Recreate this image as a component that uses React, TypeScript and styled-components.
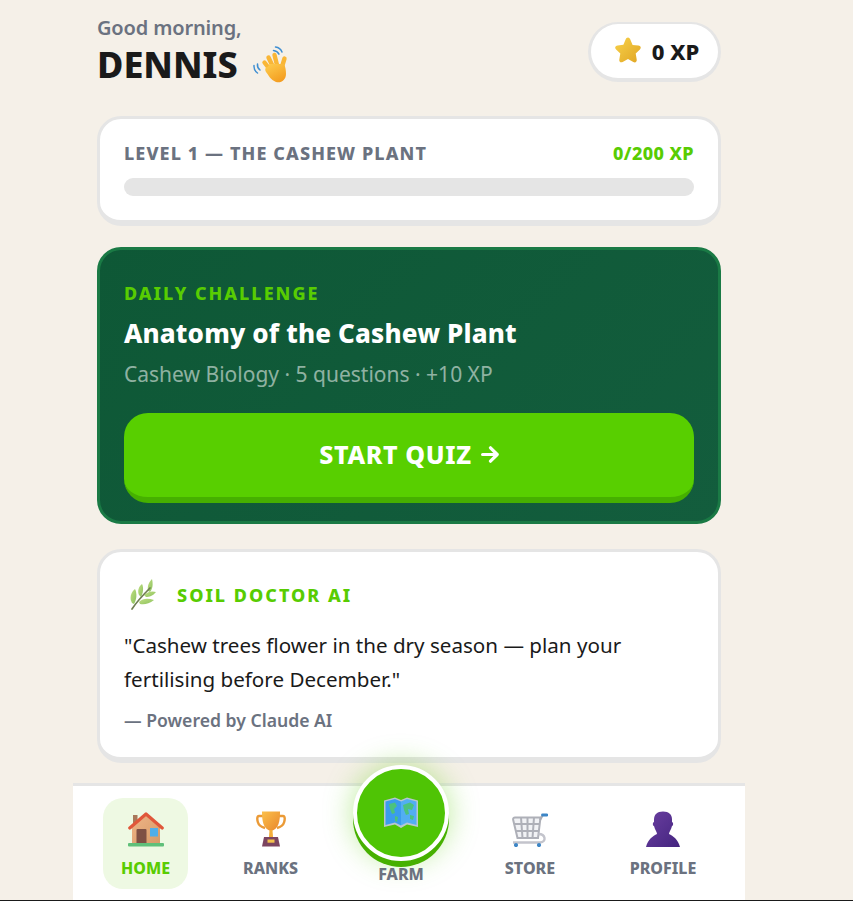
import React from 'react';
import styled, { createGlobalStyle } from 'styled-components';

const GlobalStyle = createGlobalStyle`
  html, body {
    margin: 0;
    padding: 0;
    background: #f5f0e8;
    font-family: 'Noto Sans', 'Lato', sans-serif;
  }
  * { box-sizing: border-box; }
`;

const Page = styled.div`
  width: 853px;
  height: 901px;
  overflow: hidden;
  background: #f5f0e8;
  display: flex;
  flex-direction: column;
  border-bottom: 1px solid #1a1a1a;
`;

const Column = styled.div`
  width: 672px;
  margin-left: 73px;
  height: 900px;
  display: flex;
  flex-direction: column;
`;

const Main = styled.main`
  flex: 1;
  padding: 16px 24px 0;
  display: flex;
  flex-direction: column;
`;

const Header = styled.header`
  display: flex;
  justify-content: space-between;
  align-items: flex-start;
  height: 68px;
  margin-bottom: 32px;
`;

const Greeting = styled.div`
  font-size: 20px;
  line-height: 24px;
  font-weight: 600;
  letter-spacing: -0.15px;
  color: #6b7280;
`;

const Name = styled.h1`
  margin: 2px 0 0;
  font-size: 36px;
  line-height: 46px;
  font-weight: 800;
  color: #1a1a1a;
  display: flex;
  align-items: center;
  gap: 14px;
`;

const XpPill = styled.div`
  width: 133px;
  height: 60px;
  margin-top: 6px;
  padding-left: 3px;
  border: 3px solid #e5e5e5;
  border-top-width: 2px;
  border-bottom-width: 4px;
  border-radius: 30px;
  background: #fff;
  display: flex;
  align-items: center;
  justify-content: center;
  gap: 9px;
  font-size: 22px;
  font-weight: 800;
  color: #1a1a1a;
`;

const Card = styled.section`
  background: #fff;
  border: 3px solid #e5e5e5;
  border-bottom-width: 6px;
  border-radius: 24px;
`;

const LevelCard = styled(Card)`
  height: 110px;
  padding: 22px 24px 0;
  margin-bottom: 21px;
`;

const LevelRow = styled.div`
  display: flex;
  justify-content: space-between;
  align-items: center;
  height: 24px;
  margin-bottom: 13px;
  font-size: 18px;
  font-weight: 800;
`;

const LevelTitle = styled.span`
  letter-spacing: 1.1px;
  color: #6b7280;
`;

const LevelXp = styled.span`
  letter-spacing: 0.4px;
  color: #58cc02;
`;

const Track = styled.div`
  height: 18px;
  border-radius: 9px;
  background: #e5e5e5;
  overflow: hidden;
`;

const Fill = styled.div`
  height: 100%;
  background: #58cc02;
`;

const Daily = styled.section`
  height: 277px;
  margin-bottom: 25px;
  padding: 32px 24px 0;
  border: 3px solid #1a7a45;
  border-radius: 24px;
  background: linear-gradient(135deg, #0e5836, #135d3d);
`;

const Eyebrow = styled.div`
  font-size: 18px;
  line-height: 22px;
  font-weight: 800;
  letter-spacing: 2px;
  color: #58cc02;
`;

const QuizTitle = styled.h2`
  margin: 11px 0 0;
  font-size: 26px;
  line-height: 36px;
  font-weight: 800;
  letter-spacing: 0.15px;
  color: #fff;
`;

const QuizMeta = styled.p`
  margin: 9px 0 0;
  font-size: 21px;
  line-height: 28px;
  color: rgba(255, 255, 255, 0.55);
`;

const StartButton = styled.button`
  display: flex;
  align-items: center;
  justify-content: center;
  gap: 9px;
  width: 100%;
  height: 90px;
  margin-top: 25px;
  padding: 0 0 2px;
  border: none;
  border-bottom: 6px solid #46b000;
  border-radius: 24px;
  background: #58cf00;
  font-family: inherit;
  font-size: 25px;
  font-weight: 800;
  letter-spacing: 0.6px;
  color: #fff;
`;

const SoilCard = styled(Card)`
  height: 214px;
  padding: 25px 24px 0;
`;

const SoilHead = styled.div`
  display: flex;
  align-items: center;
  gap: 15px;
  height: 36px;
`;

const SoilTitle = styled.span`
  font-size: 18px;
  font-weight: 800;
  letter-spacing: 2px;
  color: #58cc02;
`;

const Quote = styled.p`
  margin: 15px 0 0;
  font-size: 20.6px;
  line-height: 34px;
  color: #1a1a1a;
`;

const Powered = styled.div`
  margin-top: 12px;
  font-size: 17.6px;
  line-height: 24px;
  font-weight: 600;
  color: #6b7280;
`;

const Nav = styled.nav`
  height: 117px;
  background: #fff;
  border-top: 3px solid #e5e5e5;
  padding: 12px 30px 0;
  display: flex;
  justify-content: space-between;
  align-items: flex-start;
`;

const NavItem = styled.div<{ $active?: boolean; $width: number }>`
  width: ${p => p.$width}px;
  height: 91px;
  border-radius: 20px;
  background: ${p => (p.$active ? '#eef9e3' : 'transparent')};
  display: flex;
  flex-direction: column;
  align-items: center;
  padding-top: 12px;
`;

const NavIcon = styled.div`
  height: 37px;
  display: flex;
  align-items: flex-end;
  justify-content: center;
`;

const NavLabel = styled.span<{ $active?: boolean }>`
  margin-top: 11px;
  font-size: 16px;
  line-height: 20px;
  font-weight: 800;
  color: ${p => (p.$active ? '#58cc02' : '#6b7280')};
`;

const FarmItem = styled.div`
  width: 96px;
  height: 117px;
  margin-top: -33px;
  display: flex;
  flex-direction: column;
  align-items: center;
`;

const FarmButton = styled.div`
  flex: none;
  width: 96px;
  height: 96px;
  border: 4px solid #fff;
  border-radius: 50%;
  background: #4fc405;
  box-shadow: 0 6px 0 #46b000, 0 0 30px rgba(88, 204, 2, 0.4);
  display: flex;
  align-items: center;
  justify-content: center;
`;

const FarmLabel = styled(NavLabel)`
  margin-top: 3px;
`;

const Arrow = () => (
  <svg width="18" height="17" viewBox="0 0 18 17">
    <path d="M1.600 8.500 H16 M9.500 1.800 L16.200 8.500 L9.500 15.200" fill="none" stroke="#fff" strokeWidth="3.200" strokeLinecap="round" strokeLinejoin="round" />
  </svg>
);

const Star = () => (
  <svg width="30" height="30" viewBox="0 0 30 30">
    <defs>
      <linearGradient id="star" x1="0" y1="0" x2="1" y2="1">
        <stop offset="0" stopColor="#f8d24a" />
        <stop offset="1" stopColor="#e0a524" />
      </linearGradient>
    </defs>
    <path
      d="M15 1.500c1.200 0 1.900 1 2.400 2.200l2.200 5.200 5.800.7c2.400.3 3.100 2.300 1.500 3.900l-4.200 4.100 1 5.900c.4 2.300-1.400 3.600-3.400 2.500L15 23l-5.300 2.900c-2 1.100-3.800-.2-3.400-2.500l1-5.900-4.200-4.100C1.500 11.700 2.200 9.700 4.600 9.400l5.800-.7 2.200-5.200c.5-1.200 1.200-2 2.400-2z"
      fill="url(#star)"
    />
  </svg>
);

const WavingHand = () => (
  <svg width="38" height="38" viewBox="0 0 38 38">
    <defs>
      <linearGradient id="hand" x1="0.2" y1="0" x2="0.8" y2="1">
        <stop offset="0" stopColor="#fdc94a" />
        <stop offset="1" stopColor="#f39a1d" />
      </linearGradient>
    </defs>
    <g fill="none" stroke="#f9b636" strokeLinecap="round">
      <path d="M19 25 L12.500 16.500" strokeWidth="4.400" />
      <path d="M22 23 L16.500 11.500" strokeWidth="4.400" />
      <path d="M25.500 21 L22.500 9" strokeWidth="4.400" />
      <path d="M29 24 L32.500 12.500" strokeWidth="4.400" />
    </g>
    <path
      d="M15.500 21 C13.500 21 12.500 23.500 14 26 C16.500 29 18.500 34 24 36 C29 37.500 34 34 34 28 C34 24 33.500 21 32 18 L18 18z"
      fill="url(#hand)"
    />
    <g fill="none" stroke="#3f8fd2" strokeWidth="1.500" strokeLinecap="round">
      <path d="M21.500 4.500c2.400.2 4.400 1.500 5.500 3.700" />
      <path d="M23.500 1c3 .4 5.400 2.200 6.500 5" />
      <path d="M5.500 18c-.3 2.200.5 4.400 2.500 6" />
      <path d="M2 19.500c-.2 3 1 5.800 3.500 7.500" />
    </g>
  </svg>
);

const Herb = () => (
  <svg width="38" height="36" viewBox="0 0 38 36">
    <defs>
      <linearGradient id="leaf" x1="0" y1="0" x2="1" y2="1">
        <stop offset="0" stopColor="#c0de82" />
        <stop offset="1" stopColor="#8cc25e" />
      </linearGradient>
    </defs>
    <g fill="url(#leaf)">
      <path d="M8 26 C5 21 7 15 11 12 C13 16 13 22 10 27z" />
      <path d="M15 18 C13 14 15 9 18 7 C20 11 19 16 17 20z" />
      <path d="M24 14 C23 9 25 5 28 2 C29 7 29 11 26 15z" />
      <path d="M15 25 C19 21 24 21 30 23 C25 27 20 28 16 27z" />
      <path d="M20 18 C24 14 29 14 32 15 C29 19 25 20 22 20z" />
    </g>
    <path d="M8 32 C12 26 19 18 26 11" fill="none" stroke="#6f7d52" strokeWidth="1.700" strokeLinecap="round" />
  </svg>
);

const House = () => (
  <svg width="36" height="35" viewBox="0 0 36 35">
    <defs>
      <linearGradient id="wall" x1="0" y1="0" x2="1" y2="1">
        <stop offset="0" stopColor="#eeb587" />
        <stop offset="1" stopColor="#d79a68" />
      </linearGradient>
    </defs>
    <rect x="5" y="3" width="4.500" height="13" fill="#a8795a" />
    <path d="M4 15 L18 3 L32 15 V32 H4z" fill="url(#wall)" />
    <path d="M1.800 16 L18 2 L34.200 16" fill="none" stroke="#e0573a" strokeWidth="3.200" strokeLinecap="round" strokeLinejoin="round" />
    <rect x="8.500" y="17" width="10" height="15" rx="1" fill="#7e5044" />
    <rect x="22" y="16" width="8" height="8.500" fill="#50aeea" />
    <rect x="0" y="31" width="36" height="3.500" rx="1" fill="#5fc07a" />
  </svg>
);

const Trophy = () => (
  <svg width="30" height="36" viewBox="0 0 30 36">
    <defs>
      <linearGradient id="cup" x1="0" y1="0" x2="1" y2="1">
        <stop offset="0" stopColor="#fbc04a" />
        <stop offset="1" stopColor="#e8862c" />
      </linearGradient>
    </defs>
    <path d="M7 5 H3 C1 5 1 8 1.800 11 C2.600 14 5 16 9 17 M23 5 H27 C29 5 29 8 28.200 11 C27.400 14 25 16 21 17" fill="none" stroke="#eb9a36" strokeWidth="2.400" />
    <path d="M6 0.500 H24 C24 10 23 18 15 20 C7 18 6 10 6 0.500z" fill="url(#cup)" />
    <path d="M13.500 19 H16.500 L17 26 H13z" fill="#f3ad3a" />
    <path d="M8 26 H22 L24 35.500 H6z" fill="#7c4560" />
    <rect x="11.500" y="28.500" width="7" height="3.200" fill="#f4c24d" />
  </svg>
);

const WorldMap = () => (
  <svg width="36" height="32" viewBox="0 0 36 32">
    <path d="M1 3.500 L12 .5 L18 3 L24 .5 L35 3.500 V30 L24 27.500 L18 31 L12 27.500 L1 30z" fill="#b9c6cf" />
    <path d="M2.500 4.500 L12 2 L18 4.500 V28.500 L12 25.500 L2.500 28z" fill="#3a9cee" />
    <path d="M18 4.500 L24 2 L33.500 4.500 V28 L24 25.500 L18 28.500z" fill="#52aef2" />
    <g fill="#4cc27e">
      <path d="M6 7 L12 5.500 L14 9 L11 12 L12 16 L9 17 L7 12z" />
      <path d="M12 19 L15 20 L14 25 L12 24z" />
      <path d="M20 8 L27 5.500 L31 8 L29 13 L25 12 L26 17 L23 18 L21 13z" />
      <path d="M27 18 L31 19 L30 23 L27 22z" />
    </g>
  </svg>
);

const Cart = () => (
  <svg width="36" height="34" viewBox="0 0 36 34">
    <path d="M3 4.500 H28.500 L26 25 H5.500 L1 7z" fill="#f1f2f5" />
    <path d="M3 4.500 H28.500 L26 25 H5.500 L1.200 7 C.8 5.500 1.800 4.500 3 4.500z M9 4.500 L10.500 25 M15.500 4.500 V25 M22 4.500 L20.500 25 M2.200 11 H27.700 M3.700 18 H26.800" fill="none" stroke="#aeb0b8" strokeWidth="2" />
    <path d="M26.500 21 C33.500 21 35 29 28 29.500 H1" fill="none" stroke="#c3c4cc" strokeWidth="2.400" />
    <path d="M28 7 L30.500 2.500" fill="none" stroke="#a9abb3" strokeWidth="2.200" />
    <path d="M30.500 2 H35" stroke="#3d86c6" strokeWidth="2.800" strokeLinecap="round" />
    <circle cx="4" cy="32" r="2.100" fill="#3d86c6" />
    <circle cx="27" cy="32" r="2.100" fill="#3d86c6" />
  </svg>
);

const Bust = () => (
  <svg width="34" height="36" viewBox="0 0 34 36">
    <defs>
      <linearGradient id="bust" x1="0" y1="0" x2="1" y2="1">
        <stop offset="0" stopColor="#6a3fa0" />
        <stop offset="1" stopColor="#44247f" />
      </linearGradient>
    </defs>
    <path
      d="M17 .5 C23 .5 26 3.500 26 8.500 V11 C27.500 11 27.500 15 26 15 C25 19 23 21 23 23 C27 25 32 28 34 36 H0 C2 28 7 25 11 23 C11 21 9 19 8 15 C6.500 15 6.500 11 8 11 V8.500 C8 3.500 11 .5 17 .5z"
      fill="url(#bust)"
    />
  </svg>
);

function App() {
  return (
    <Page>
      <GlobalStyle />
      <Column>
        <Main>
          <Header>
            <div>
              <Greeting>Good morning,</Greeting>
              <Name>
                DENNIS <WavingHand />
              </Name>
            </div>
            <XpPill>
              <Star /> 0 XP
            </XpPill>
          </Header>

          <LevelCard>
            <LevelRow>
              <LevelTitle>LEVEL 1 — THE CASHEW PLANT</LevelTitle>
              <LevelXp>0/200 XP</LevelXp>
            </LevelRow>
            <Track>
              <Fill style={{ width: `${(0 / 200) * 100}%` }} />
            </Track>
          </LevelCard>

          <Daily>
            <Eyebrow>DAILY CHALLENGE</Eyebrow>
            <QuizTitle>Anatomy of the Cashew Plant</QuizTitle>
            <QuizMeta>Cashew Biology · 5 questions · +10 XP</QuizMeta>
            <StartButton>START QUIZ <Arrow /></StartButton>
          </Daily>

          <SoilCard>
            <SoilHead>
              <Herb />
              <SoilTitle>SOIL DOCTOR AI</SoilTitle>
            </SoilHead>
            <Quote>
              "Cashew trees flower in the dry season — plan your fertilising before December."
            </Quote>
            <Powered>— Powered by Claude AI</Powered>
          </SoilCard>
        </Main>

        <Nav>
          <NavItem $active $width={85}>
            <NavIcon><House /></NavIcon>
            <NavLabel $active>HOME</NavLabel>
          </NavItem>
          <NavItem $width={85}>
            <NavIcon><Trophy /></NavIcon>
            <NavLabel>RANKS</NavLabel>
          </NavItem>
          <FarmItem>
            <FarmButton>
              <WorldMap />
            </FarmButton>
            <FarmLabel>FARM</FarmLabel>
          </FarmItem>
          <NavItem $width={82}>
            <NavIcon><Cart /></NavIcon>
            <NavLabel>STORE</NavLabel>
          </NavItem>
          <NavItem $width={104}>
            <NavIcon><Bust /></NavIcon>
            <NavLabel>PROFILE</NavLabel>
          </NavItem>
        </Nav>
      </Column>
    </Page>
  );
}

export default App;
